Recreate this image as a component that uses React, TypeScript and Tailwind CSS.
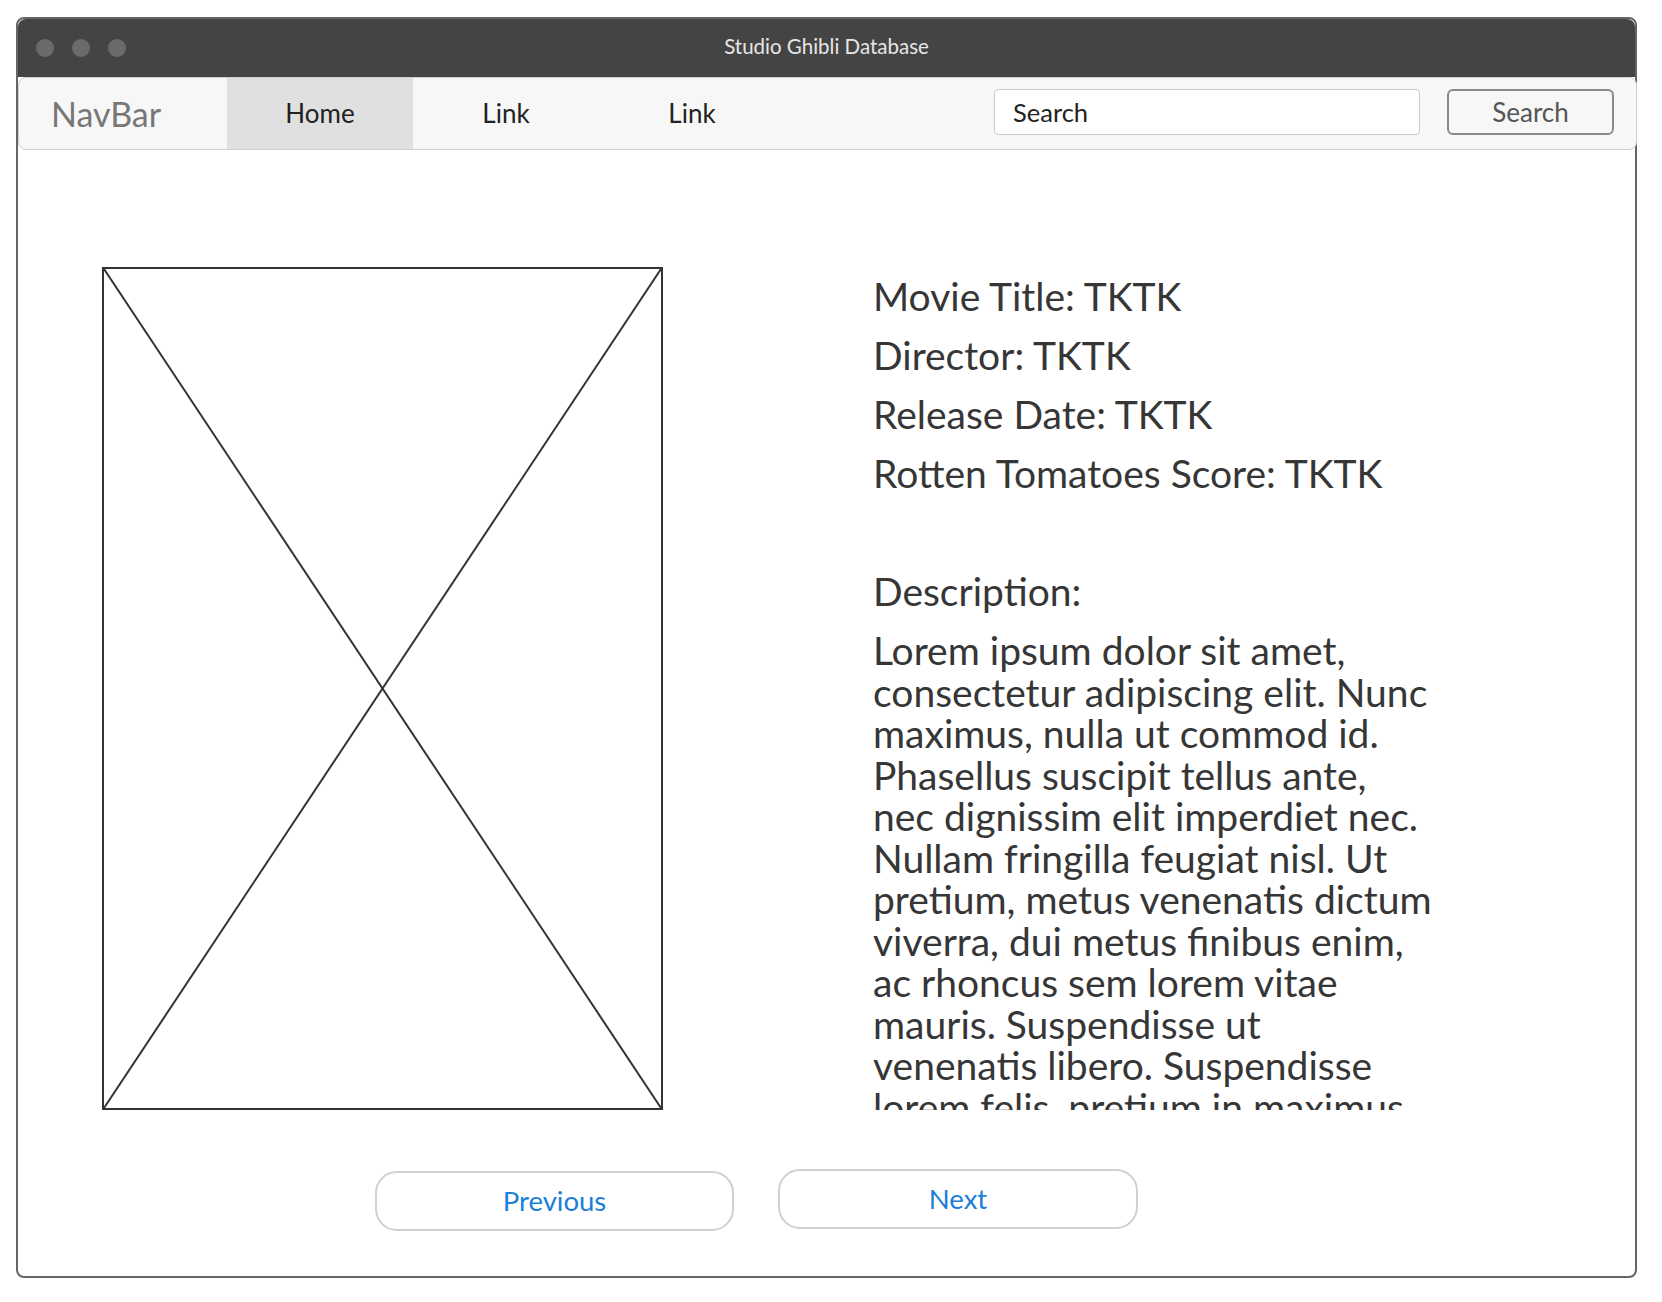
import React from 'react'

const FONT = { fontFamily: 'Lato, "Open Sans", sans-serif' }

const DESCRIPTION_LINES = [
  'Lorem ipsum dolor sit amet,',
  'consectetur adipiscing elit. Nunc',
  'maximus, nulla ut commod id.',
  'Phasellus suscipit tellus ante,',
  'nec dignissim elit imperdiet nec.',
  'Nullam fringilla feugiat nisl. Ut',
  'pretium, metus venenatis dictum',
  'viverra, dui metus finibus enim,',
  'ac rhoncus sem lorem vitae',
  'mauris. Suspendisse ut',
  'venenatis libero. Suspendisse',
  'lorem felis, pretium in maximus',
  'eget, aliquet sed nunc.',
]

const FACTS = [
  'Movie Title: TKTK',
  'Director: TKTK',
  'Release Date: TKTK',
  'Rotten Tomatoes Score: TKTK',
]

function TitleBar() {
  return (
    <div className="relative flex h-[58px] items-center rounded-t-[8px] bg-[#444444] pl-[18px]">
      <div className="flex gap-[18px]">
        <span className="h-[18px] w-[18px] rounded-full bg-[#6b6b6b]" />
        <span className="h-[18px] w-[18px] rounded-full bg-[#6b6b6b]" />
        <span className="h-[18px] w-[18px] rounded-full bg-[#6b6b6b]" />
      </div>
      <div className="absolute inset-x-0 top-[14px] text-center text-[20.5px] leading-[26px] text-[#e6e6e6]">
        Studio Ghibli Database
      </div>
    </div>
  )
}

function NavBar() {
  const links = ['Home', 'Link', 'Link']
  return (
    <nav className="-mr-[2px] flex h-[73px] items-stretch rounded-[8px] border border-[#cfcfcf] bg-[#f7f7f7]">
      <div className="flex w-[208px] items-center pl-[32px] text-[34px] text-[#777777]">NavBar</div>
      {links.map((label, i) => (
        <div
          key={i}
          className={`flex w-[186px] items-center justify-center text-[26px] text-[#222222] ${
            i === 0 ? 'bg-[#e0e0e0]' : ''
          }`}
        >
          {label}
        </div>
      ))}
      <div className="ml-auto flex items-center gap-[27px] pb-[3px] pr-[22px]">
        <div className="flex h-[46px] w-[426px] items-center rounded-[4px] border border-[#cccccc] bg-white pl-[18px] text-[25.5px] text-[#222222]">
          Search
        </div>
        <div className="flex h-[46px] w-[167px] items-center justify-center rounded-[6px] border-2 border-[#8a8a8a] text-[26px] text-[#555555]">
          Search
        </div>
      </div>
    </nav>
  )
}

function Placeholder() {
  return (
    <div className="h-[843px] w-[561px] shrink-0 border-2 border-[#333333]">
      <svg className="h-full w-full" viewBox="0 0 557 839" preserveAspectRatio="none">
        <line x1="0" y1="0" x2="557" y2="839" stroke="#333333" strokeWidth="2" />
        <line x1="557" y1="0" x2="0" y2="839" stroke="#333333" strokeWidth="2" />
      </svg>
    </div>
  )
}

export default function App() {
  return (
    <div className="min-h-screen bg-white pl-[16px] pt-[17px]" style={FONT}>
      <div className="flex h-[1261px] w-[1621px] flex-col rounded-[8px] border-2 border-[#666666] bg-white">
        <TitleBar />
        <NavBar />
        <main className="flex flex-1 flex-col">
          <div className="flex pl-[84px] pt-[117px]">
            <Placeholder />
            <div className="ml-[210px] h-[843px] w-[640px] overflow-hidden text-[39px] text-[#363636]">
              {FACTS.map((f) => (
                <p key={f} className="leading-[59px]">
                  {f}
                </p>
              ))}
              <p className="mt-[59px] leading-[59px]">Description:</p>
              <div className="mt-[9px] leading-[41.5px]">
                {DESCRIPTION_LINES.map((l) => (
                  <span key={l} className="block whitespace-nowrap">
                    {l}
                  </span>
                ))}
              </div>
            </div>
          </div>
          <div className="flex items-start pl-[357px] pt-[59px]">
            <button className="mt-[2px] h-[60px] w-[359px] rounded-[22px] border-2 border-[#d0d0d0] bg-white text-[27.5px] text-[#1a7fd9]">
              Previous
            </button>
            <button className="ml-[44px] h-[60px] w-[360px] rounded-[22px] border-2 border-[#d0d0d0] bg-white text-[27.5px] text-[#1a7fd9]">
              Next
            </button>
          </div>
        </main>
      </div>
    </div>
  )
}
